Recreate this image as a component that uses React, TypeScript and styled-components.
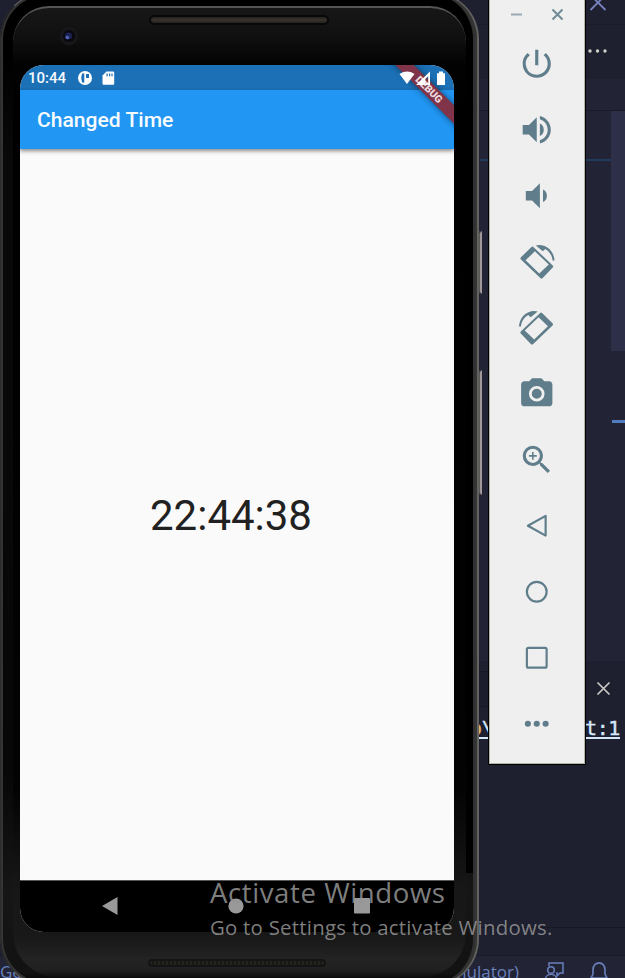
import React from "react";
import styled, { createGlobalStyle } from "styled-components";

const GlobalStyle = createGlobalStyle`
  * { box-sizing: border-box; }
  html, body { margin: 0; padding: 0; background: #222436; overflow: hidden; }
`;

const Desktop = styled.main`
  position: relative;
  width: 625px;
  height: 978px;
  overflow: hidden;
  background: #222436;
`;

/* ---------- code editor behind the windows ---------- */

const Editor = styled.section`
  display: flex;
  flex-direction: column;
  height: 100%;
  font-family: "Open Sans", "Noto Sans", sans-serif;
`;

const EditorBand = styled.div<{ $h: number; $bg: string; $line?: string }>`
  flex: none;
  display: flex;
  justify-content: flex-end;
  height: ${(p) => p.$h}px;
  background: ${(p) => p.$bg};
  border-bottom: ${(p) => (p.$line ? `1px solid ${p.$line}` : "none")};
`;

const WindowClose = styled.svg`
  width: 20px;
  height: 12px;
  margin-right: 17px;
`;

const TabMore = styled.svg`
  width: 24px;
  height: 8px;
  margin: 22px 16px 0 0;
`;

const CodeArea = styled.div`
  flex: none;
  display: flex;
  justify-content: flex-end;
  height: 550px;
  background: #222436;
`;

const CodePane = styled.div`
  width: 131px;
  height: 50px;
  border-bottom: 2px solid #213b5c;
`;

const Ruler = styled.div`
  width: 14px;
  height: 312px;
  display: flex;
  flex-direction: column;
`;

const Thumb = styled.div`
  flex: none;
  height: 240px;
  background: #2d2f48;
`;

const RulerMark = styled.div`
  flex: none;
  height: 3px;
  margin: 69px 0 0 1px;
  background: #527cc0;
`;

const PanelHeader = styled.div`
  flex: none;
  display: flex;
  justify-content: space-between;
  height: 46px;
  background: #1e2030;
`;

const PanelInput = styled.div`
  width: 30px;
  height: 36px;
  margin: 10px 0 0 478px;
  background: #1b1d2c;
  border-top: 1px solid #151722;
  border-bottom: 1px solid #151722;
`;

const PanelClose = styled.svg`
  width: 15px;
  height: 15px;
  margin: 20px 14px 0 0;
`;

const Terminal = styled.div`
  flex: none;
  display: flex;
  justify-content: space-between;
  height: 221px;
  padding: 10px 5px 0 470px;
  background: #1e2030;
  border-bottom: 1px solid #161823;
`;

const PathText = styled.span<{ $warm?: boolean }>`
  height: 22px;
  font: 20px/23px "DejaVu Sans Mono", monospace;
  letter-spacing: -0.4px;
  color: ${(p) => (p.$warm ? "#dfb46c" : "#d5e6fa")};
  -webkit-text-stroke: 0.4px currentColor;
  border-bottom: 2px solid #d5e6fa;
  b { font-weight: 400; color: #d5e6fa; }
`;

const StatusLine = styled.footer`
  flex: none;
  display: flex;
  justify-content: space-between;
  height: 23px;
  padding: 4px 16px 0 0;
  color: #6a80bd;
  font-size: 17px;
  line-height: 24px;
`;

const StatusGroup = styled.div`
  display: flex;
  gap: 25px;
  svg { width: 20px; height: 22px; margin-top: 1px; }
`;

/* ---------- phone ---------- */

const Phone = styled.section`
  position: absolute;
  left: 0;
  top: -8px;
  width: 479px;
  height: 994px;
  border-radius: 47px;
  border: 1px solid #696969;
  border-left-color: #2c2c2c;
  border-right: 2px solid #62625e;
  background:
    linear-gradient(#000, #000) right 0 top 0 / 24px 880px no-repeat,
    linear-gradient(#000 0, #000 60px, #090909 170px, #070707 780px, #161616 900px, #121212 980px, #000);
  box-shadow: inset 0 0 0 2px #343434, inset -4px 0 0 #303030;
  padding: 13px 11px 8px 12px;
`;

const Face = styled.div`
  height: 100%;
  padding: 0 13px 0 7px;
  border-radius: 36px 36px 44px 44px;
  border-top: 2px solid #555;
  background: linear-gradient(#171717 0, #101010 30px, #020202 58px, #000 110px,
    #030303 780px, #171717 880px, #181818 930px, #232323 952px, #202020 962px, #090909 972px);
`;

const Bezel = styled.div<{ $h: number }>`
  position: relative;
  height: ${(p) => p.$h}px;
  display: flex;
  justify-content: center;
`;

const Speaker = styled.div<{ $bottom?: boolean }>`
  width: ${(p) => (p.$bottom ? 178 : 180)}px;
  height: ${(p) => (p.$bottom ? 8 : 10)}px;
  margin: ${(p) => (p.$bottom ? "27px 0 0 1px" : "7px 0 0 4px")};
  border: 2px solid ${(p) => (p.$bottom ? "#141414" : "#080808")};
  border-radius: 5px;
  background: ${(p) =>
    p.$bottom
      ? "repeating-linear-gradient(90deg, #24231e 0 2px, #181814 2px 4px)"
      : "linear-gradient(#24211e, #37322d, #25221f)"};
`;

const Lens = styled.svg`
  position: absolute;
  left: 38.5px;
  top: 18px;
  width: 20px;
  height: 20px;
`;

const Screen = styled.div`
  position: relative;
  width: 434px;
  height: 867px;
  border-radius: 24px;
  overflow: hidden;
  display: flex;
  flex-direction: column;
  background: #fafafa;
  font-family: Roboto, sans-serif;
`;

const StatusBar = styled.div`
  flex: none;
  display: flex;
  align-items: center;
  height: 25px;
  padding: 0 7px 0 8px;
  background: #1b70b6;
  color: #f4f9fd;
  font-size: 15px;
  font-weight: 500;
`;

const Clock = styled.span`
  width: 49px;
`;

const StatusIcons = styled.svg`
  width: 40px;
  height: 16px;
`;

const SignalIcons = styled.svg`
  position: relative;
  z-index: 2;
  width: 48px;
  height: 16px;
  margin-left: auto;
`;

const Ribbon = styled.div`
  position: absolute;
  z-index: 1;
  left: 359px;
  top: 18px;
  width: 100px;
  height: 13px;
  transform: rotate(45deg);
  background: #7f3449;
  box-shadow: 0 0 6px rgba(0, 0, 0, 0.5);
  color: #ecd9de;
  font-size: 10.4px;
  line-height: 13px;
  font-weight: 900;
  text-align: center;
`;

const AppBar = styled.header`
  flex: none;
  height: 59px;
  padding-left: 17px;
  background: #2196f3;
  box-shadow: 0 2px 4px rgba(0, 0, 0, 0.45);
  color: #f8fcff;
  font-size: 21.1px;
  line-height: 60px;
  font-weight: 500;
`;

const AppBody = styled.div`
  flex: 1;
  display: flex;
  align-items: center;
  justify-content: center;
  padding: 1px 12px 0 0;
  color: #212121;
  font-size: 42px;
`;

const NavBar = styled.nav`
  flex: none;
  display: flex;
  justify-content: space-between;
  align-items: center;
  height: 52px;
  padding: 0 83px 2px 81px;
  background: #000;
  border-top: 1px solid #555;
  svg { width: 18px; height: 20px; }
`;

const SideKey = styled.div<{ $y: number; $h: number }>`
  position: absolute;
  left: 478px;
  top: ${(p) => p.$y}px;
  width: 4px;
  height: ${(p) => p.$h}px;
  background: #595657;
  border-right: 2px solid #a09899;
  border-top: 2px solid #3c3b3b;
  border-bottom: 2px solid #3c3b3b;
`;

/* ---------- emulator toolbar ---------- */

const Toolbar = styled.aside`
  position: absolute;
  left: 488px;
  top: -2px;
  width: 98px;
  height: 767px;
  display: flex;
  flex-direction: column;
  background: #efefef;
  border: 1px solid #000;
  box-shadow: inset 0 0 0 1px #b5b5ac;
`;

const ToolbarHead = styled.div`
  flex: none;
  display: flex;
  justify-content: space-between;
  height: 32px;
  padding: 9px 21px 0 21px;
  svg { width: 13px; height: 13px; }
`;

const ToolButton = styled.button`
  flex: none;
  display: flex;
  align-items: center;
  justify-content: center;
  height: 66px;
  padding: 0 1.5px 0 0;
  border: 0;
  background: none;
  color: #607d8b;
`;

const ToolGlyph = styled.svg<{ $flip?: boolean }>`
  width: 37.5px;
  height: 37.5px;
  overflow: visible;
  transform: ${(p) => (p.$flip ? "scaleX(-1)" : "none")};
`;

const Watermark = styled.div`
  position: absolute;
  left: 210px;
  top: 873px;
  white-space: nowrap;
  color: rgba(150, 150, 150, 0.85);
  font-family: "Open Sans", "Noto Sans", sans-serif;
`;

const WatermarkTitle = styled.div`
  font-size: 27.6px;
  line-height: 38px;
  font-weight: 400;
  letter-spacing: 0.57px;
`;

const WatermarkNote = styled.div`
  font-size: 20.4px;
  line-height: 32px;
  font-weight: 400;
  letter-spacing: 0.24px;
`;

const Filled = ({ d }: { d: string }) => (
  <ToolGlyph viewBox="0 0 24 24" fill="currentColor"><path d={d} /></ToolGlyph>
);

const Rotate = ({ flip }: { flip?: boolean }) => (
  <ToolGlyph viewBox="-19 -19 38 38" $flip={flip} fill="currentColor">
    <path
      fillRule="evenodd"
      d="M-5.6-14.8Q-4.4-16-3.2-14.8L16.2 3.8Q17.2 4.8 16.2 5.8L6 16.4Q4.8 17.6 3.6 16.4L-16-2.2Q-17-3.4-16-4.5ZM-1.9-10.6L-11.3-1.4 2.6 11.8 12.2 2.8Z"
    />
    <path d="M-1-16.4C8-19 17.4-11.8 18-1.3H16C15.6-6.5 12.7-10.8 8.6-13L6.2-10.6Z" />
  </ToolGlyph>
);

const Outline = ({ children }: { children: React.ReactNode }) => (
  <ToolGlyph viewBox="-19 -19 38 38" fill="none" stroke="currentColor" strokeWidth="2.2" strokeLinejoin="round">
    {children}
  </ToolGlyph>
);

export default function App() {
  return (
    <>
      <GlobalStyle />
      <Desktop>
        <Editor>
          <EditorBand $h={25} $bg="#1e2030" $line="#191b29">
            <WindowClose viewBox="0 0 20 12" stroke="#7883c0" strokeWidth="1.8">
              <path d="M2.5-5 17.5 10M17.5-5 2.5 10" />
            </WindowClose>
          </EditorBand>
          <EditorBand $h={54} $bg="#1e2030">
            <TabMore viewBox="0 0 24 8" fill="#d3d0c8">
              <circle cx="5" cy="4" r="1.7" /><circle cx="12.5" cy="4" r="1.7" /><circle cx="20" cy="4" r="1.7" />
            </TabMore>
          </EditorBand>
          <EditorBand $h={32} $bg="#222436" $line="#191b29" />
          <CodeArea>
            <CodePane />
            <Ruler><Thumb /><RulerMark /></Ruler>
          </CodeArea>
          <PanelHeader>
            <PanelInput />
            <PanelClose viewBox="0 0 15 15" stroke="#c9c7c3" strokeWidth="1.7"><path d="M1.5 1.5l12 12m0-12l-12 12" /></PanelClose>
          </PanelHeader>
          <Terminal>
            <PathText $warm>o<b>\</b></PathText>
            <PathText>t:1</PathText>
          </Terminal>
          <EditorBand $h={28} $bg="#1e2030" $line="#191b29" />
          <StatusLine>
            <span>Go</span>
            <StatusGroup>
              <span>emulator)</span>
              <svg viewBox="0 0 20 22" fill="none" stroke="#6a80bd" strokeWidth="1.5">
                <path d="M5 5V2h14v10h-3l-3 3v-3h-1" /><circle cx="7" cy="9" r="3.3" /><path d="M1 20c0-9 12-9 12 0" />
              </svg>
              <svg viewBox="0 0 20 22" fill="none" stroke="#6a80bd" strokeWidth="1.6">
                <path d="M2 17h16l-2-4V9C16-.5 4-.5 4 9v4zM8 18c0 3 4 3 4 0" />
              </svg>
            </StatusGroup>
          </StatusLine>
        </Editor>

        <SideKey $y={231} $h={63} />
        <SideKey $y={370} $h={125} />
        <Phone>
          <Face>
            <Bezel $h={57}>
              <Lens viewBox="0 0 20 20">
                <circle cx="10" cy="10" r="9.2" fill="#171719" /><circle cx="10" cy="10" r="6" fill="#08080f" />
                <circle cx="9.5" cy="10" r="3.5" fill="#1c2254" /><circle cx="8.3" cy="11.5" r="1.8" fill="#5365b8" />
              </Lens>
              <Speaker />
            </Bezel>
            <Screen>
              <StatusBar>
                <Clock>10:44</Clock>
                <StatusIcons viewBox="0 0 40 16" fill="#fff">
                  <circle cx="8" cy="8" r="7" />
                  <path d="M5 3.5h2.3v9H5Q3.4 8 5 3.5zM9 4h3v4H9z" fill="#1b70b6" />
                  <path d="M29.5 1.5H36q1.2 0 1.2 1.2v11q0 1-1 1H26.5q-1 0-1-1V5.5z" />
                  <path d="M29.5 3.5h1.3v2.8h-1.3zM32 3.5h1.2v2.8H32zM34.4 3.5h1.2v2.8h-1.2z" fill="#1b70b6" />
                </StatusIcons>
                <SignalIcons viewBox="0 0 48 16" fill="#fff">
                  <path d="M.5 4Q8-.8 15.5 4L8 14z" />
                  <path fillRule="evenodd" d="M31 1.5V15H17zM29.2 6.2L26.3 9v4.2h2.9z" />
                  <path d="M38 3.2h2V1.6h4v1.6h2V15h-8z" />
                </SignalIcons>
              </StatusBar>
              <AppBar>Changed Time</AppBar>
              <AppBody>22:44:38</AppBody>
              <NavBar>
                <svg viewBox="0 0 18 20" fill="#999"><path d="M1 10 16.5 1v18z" /></svg>
                <svg viewBox="0 0 18 20" fill="#999"><circle cx="9" cy="10" r="7.6" /></svg>
                <svg viewBox="0 0 18 20" fill="#999"><rect x="1" y="2" width="16" height="15.5" rx="1" /></svg>
              </NavBar>
              <Ribbon>DEBUG</Ribbon>
            </Screen>
            <Bezel $h={40}><Speaker $bottom /></Bezel>
          </Face>
        </Phone>

        <Toolbar>
          <ToolbarHead>
            <svg viewBox="0 0 13 13" stroke="#98a9b2" strokeWidth="2"><path d="M1 6.5h11" /></svg>
            <svg viewBox="0 0 13 13" stroke="#718b97" strokeWidth="2"><path d="M1.5 1.5l10 10m0-10l-10 10" /></svg>
          </ToolbarHead>
          <ToolButton><Filled d="M13 3h-2v10h2V3zm4.83 2.17l-1.42 1.42A6.92 6.92 0 0 1 19 12c0 3.87-3.13 7-7 7A6.995 6.995 0 0 1 7.58 6.58L6.17 5.17A8.932 8.932 0 0 0 3 12a9 9 0 0 0 18 0c0-2.74-1.23-5.18-3.17-6.83z" /></ToolButton>
          <ToolButton><Filled d="M3 9v6h4l5 5V4L7 9H3zm13.5 3A4.5 4.5 0 0 0 14 7.97v8.05A4.5 4.5 0 0 0 16.5 12zM14 3.23v2.06c2.89.86 5 3.54 5 6.71s-2.11 5.85-5 6.71v2.06c4.01-.91 7-4.49 7-8.77s-2.99-7.86-7-8.77z" /></ToolButton>
          <ToolButton><Filled d="M18.5 12A4.5 4.5 0 0 0 16 7.97v8.05A4.5 4.5 0 0 0 18.5 12zM5 9v6h4l5 5V4L9 9H5z" /></ToolButton>
          <ToolButton><Rotate /></ToolButton>
          <ToolButton><Rotate flip /></ToolButton>
          <ToolButton><Filled d="M12 8.8a3.2 3.2 0 1 0 0 6.4 3.2 3.2 0 0 0 0-6.4zM9 2L7.17 4H4c-1.1 0-2 .9-2 2v12c0 1.1.9 2 2 2h16c1.1 0 2-.9 2-2V6c0-1.1-.9-2-2-2h-3.17L15 2H9zm3 15a5 5 0 1 1 0-10 5 5 0 0 1 0 10z" /></ToolButton>
          <ToolButton><Filled d="M15.5 14h-.79l-.28-.27A6.47 6.47 0 0 0 16 9.5 6.5 6.5 0 1 0 9.5 16c1.61 0 3.09-.59 4.23-1.57l.27.28v.79l5 4.99L20.49 19l-4.99-5zm-6 0a4.5 4.5 0 1 1 0-9 4.5 4.5 0 0 1 0 9zm2.5-4h-2v2H9v-2H7V9h2V7h1v2h2v1z" /></ToolButton>
          <ToolButton><Outline><path d="M-9 0 9-10V10z" /></Outline></ToolButton>
          <ToolButton><Outline><circle r="10" /></Outline></ToolButton>
          <ToolButton><Outline><rect x="-10" y="-10" width="20" height="20" rx="1.5" /></Outline></ToolButton>
          <ToolButton>
            <ToolGlyph viewBox="-19 -19 38 38" fill="currentColor">
              <circle cx="-9" r="3.1" /><circle r="3.1" /><circle cx="9" r="3.1" />
            </ToolGlyph>
          </ToolButton>
        </Toolbar>

        <Watermark>
          <WatermarkTitle>Activate Windows</WatermarkTitle>
          <WatermarkNote>Go to Settings to activate Windows.</WatermarkNote>
        </Watermark>
      </Desktop>
    </>
  );
}
